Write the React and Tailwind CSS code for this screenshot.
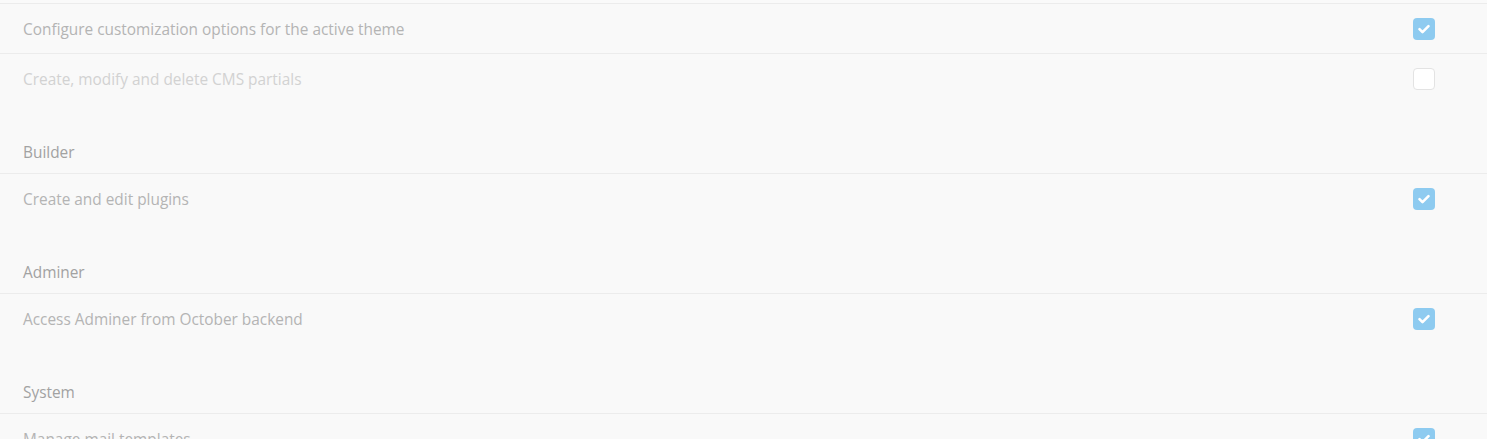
import React from 'react'

const groups = [
  {
    title: null,
    rows: [
      { label: 'Configure customization options for the active theme', checked: true },
      { label: 'Create, modify and delete CMS partials', checked: false },
    ],
  },
  { title: 'Builder', rows: [{ label: 'Create and edit plugins', checked: true }] },
  { title: 'Adminer', rows: [{ label: 'Access Adminer from October backend', checked: true }] },
  { title: 'System', rows: [{ label: 'Manage mail templates', checked: true }] },
]

const Checkbox = ({ checked }) =>
  checked ? (
    <span className="flex h-[22px] w-[22px] items-center justify-center rounded-[4px] bg-[#8ecbf0]">
      <svg width="14" height="14" viewBox="0 0 14 14" fill="none">
        <path d="M2.5 7.2l3 3 6-6" stroke="#fff" strokeWidth="2.6" strokeLinecap="round" strokeLinejoin="round" />
      </svg>
    </span>
  ) : (
    <span className="block h-[22px] w-[22px] rounded-[4px] border border-[#e3e3e3] bg-white" />
  )

const Row = ({ label, checked, last }) => (
  <div className={`flex h-[50px] items-center justify-between pl-[23px] pr-[52px] ${last ? '' : 'border-b border-[#ececec]'}`}>
    <span className={`pt-[2px] text-[15.4px] leading-[20px] ${checked ? 'text-[#b4b4b4]' : 'text-[#d2d2d2]'}`}>{label}</span>
    <Checkbox checked={checked} />
  </div>
)

export default function App() {
  return (
    <div className="h-[439px] overflow-hidden bg-[#f9f9f9]" style={{ fontFamily: '"Open Sans", "Noto Sans", sans-serif' }}>
      <div className="h-[4px] border-b border-[#ececec] bg-[#fafafa]" />
      {groups.map((g, gi) => (
        <div key={gi}>
          {g.title && (
            <div className="flex h-[70px] items-end border-b border-[#ececec] pb-[10px] pl-[23px]">
              <span className="text-[15.4px] leading-[20px] text-[#a2a2a2]">{g.title}</span>
            </div>
          )}
          {g.rows.map((r, ri) => (
            <Row key={ri} {...r} last={ri === g.rows.length - 1} />
          ))}
        </div>
      ))}
    </div>
  )
}
